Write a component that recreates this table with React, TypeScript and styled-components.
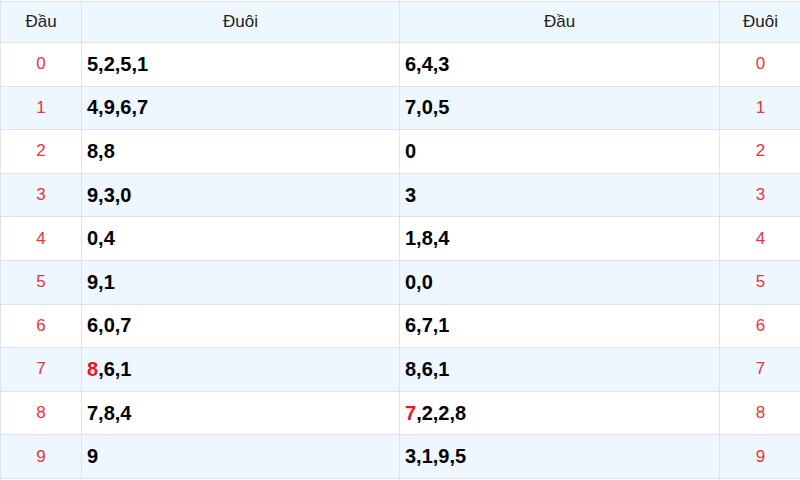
import React from "react"
import styled, { createGlobalStyle } from "styled-components"

const GlobalStyle = createGlobalStyle`
  body {
    margin: 0;
    padding-top: 1px;
    background: #fff;
    font-family: "Liberation Sans", Arial, sans-serif;
  }
`

const Table = styled.table`
  width: 800px;
  border-collapse: collapse;
  table-layout: fixed;
  color: #000;
`

const HeadCell = styled.th<{ $w: number }>`
  width: ${(p) => p.$w}px;
  height: 40px;
  padding: 0;
  background: #eef6fe;
  border: 1px solid #dde3ea;
  font-size: 17px;
  font-weight: normal;
  color: #222;
  text-align: center;
`

const Row = styled.tr<{ $alt: boolean }>`
  background: ${(p) => (p.$alt ? "#eef6fe" : "#fff")};
`

const DigitCell = styled.td`
  height: 42.6px;
  padding: 0;
  border: 1px solid #dde3ea;
  text-align: center;
  font-size: 17px;
  color: #f0303a;
`

const ListCell = styled.td`
  padding: 0 5px;
  border: 1px solid #dde3ea;
  font-size: 20px;
  font-weight: bold;
`

const Hit = styled.span`
  color: #f0141e;
`

type Data = { dau: string; dauHit?: boolean; duoi: string; duoiHit?: boolean }

const rows: Data[] = [
  { dau: "5,2,5,1", duoi: "6,4,3" },
  { dau: "4,9,6,7", duoi: "7,0,5" },
  { dau: "8,8", duoi: "0" },
  { dau: "9,3,0", duoi: "3" },
  { dau: "0,4", duoi: "1,8,4" },
  { dau: "9,1", duoi: "0,0" },
  { dau: "6,0,7", duoi: "6,7,1" },
  { dau: "8,6,1", dauHit: true, duoi: "8,6,1" },
  { dau: "7,8,4", duoi: "7,2,2,8", duoiHit: true },
  { dau: "9", duoi: "3,1,9,5" },
]

const List = ({ text, hit }: { text: string; hit?: boolean }) =>
  hit ? (
    <>
      <Hit>{text[0]}</Hit>
      {text.slice(1)}
    </>
  ) : (
    <>{text}</>
  )

export default function App() {
  return (
    <>
      <GlobalStyle />
      <Table>
        <thead>
          <tr>
            <HeadCell $w={80}>Đầu</HeadCell>
            <HeadCell $w={317}>Đuôi</HeadCell>
            <HeadCell $w={319}>Đầu</HeadCell>
            <HeadCell $w={81}>Đuôi</HeadCell>
          </tr>
        </thead>
        <tbody>
          {rows.map((r, i) => (
            <Row key={i} $alt={i % 2 === 1}>
              <DigitCell>{i}</DigitCell>
              <ListCell>
                <List text={r.dau} hit={r.dauHit} />
              </ListCell>
              <ListCell>
                <List text={r.duoi} hit={r.duoiHit} />
              </ListCell>
              <DigitCell>{i}</DigitCell>
            </Row>
          ))}
        </tbody>
      </Table>
    </>
  )
}
